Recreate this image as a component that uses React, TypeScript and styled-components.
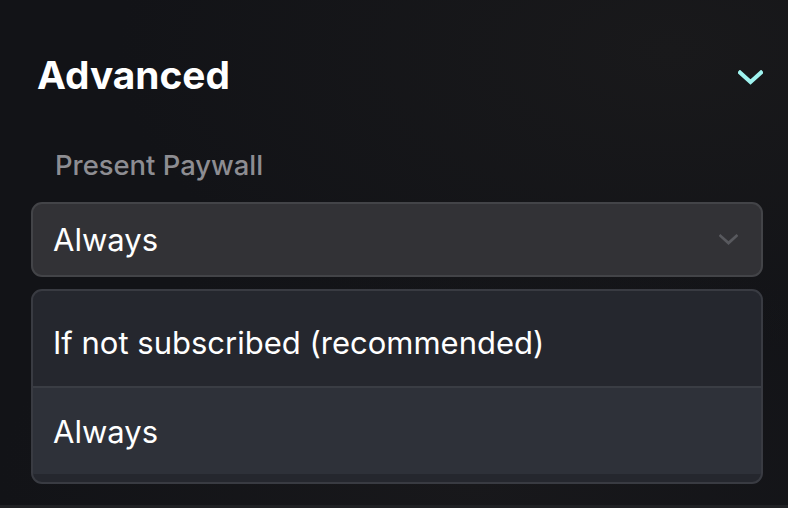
import { FC, useState } from "react"
import styled, { createGlobalStyle } from "styled-components"

const options = ["If not subscribed (recommended)", "Always"]

const GlobalStyle = createGlobalStyle`
  html, body {
    margin: 0;
    padding: 0;
    background: #131418;
  }
  body {
    font-family: Inter, "Noto Sans", "Liberation Sans", sans-serif;
    -webkit-font-smoothing: antialiased;
  }
`

const Chevron: FC<{ size: number; stroke: number; color: string }> = ({
  size,
  stroke,
  color,
}) => (
  <svg
    width={size}
    height={size * 0.6}
    viewBox="0 0 25 15"
    fill="none"
    stroke={color}
    strokeWidth={stroke}
    strokeLinecap="square"
  >
    <path d="M2 2.5 L12.5 12 L23 2.5" />
  </svg>
)

const App: FC = () => {
  const [value, setValue] = useState("Always")
  const [hovered, setHovered] = useState("Always")

  return (
    <>
      <GlobalStyle />
      <Page>
        <Header>
          <Title>Advanced</Title>
          <ToggleButton aria-label="Collapse">
            <Chevron size={25} stroke={4} color="#9ff3ef" />
          </ToggleButton>
        </Header>

        <Label>Present Paywall</Label>

        <SelectBox>
          <span>{value}</span>
          <Chevron size={19} stroke={3.6} color="#58595e" />
        </SelectBox>

        <OptionList>
          {options.map((option) => (
            <Option
              key={option}
              $active={option === hovered}
              onMouseEnter={() => setHovered(option)}
              onClick={() => setValue(option)}
            >
              {option}
            </Option>
          ))}
        </OptionList>
      </Page>
    </>
  )
}

export default App

const Page = styled.div`
  width: 788px;
  height: 508px;
  box-sizing: border-box;
  padding: 51px 25px 0 31px;
  background: radial-gradient(
      ellipse 70% 60% at 85% 10%,
      #19191b 0%,
      rgba(25, 25, 27, 0) 100%
    ),
    radial-gradient(
      ellipse 60% 50% at 60% 95%,
      #18181b 0%,
      rgba(24, 24, 27, 0) 100%
    ),
    #121317;
  border-bottom: 3px solid #202124;
  display: flex;
  flex-direction: column;
  overflow: hidden;
`

const Header = styled.div`
  display: flex;
  align-items: center;
  justify-content: space-between;
  height: 48px;
`

const Title = styled.h2`
  margin: 0 0 0 6px;
  font-size: 38.8px;
  line-height: 48px;
  font-weight: 700;
  color: #ffffff;
`

const ToggleButton = styled.button`
  background: none;
  border: 0;
  padding: 0;
  display: flex;
  margin-top: 4px;
  cursor: pointer;
`

const Label = styled.div`
  margin: 49px 0 0 24px;
  font-size: 27.4px;
  line-height: 34px;
  font-weight: 500;
  color: #8d8d92;
`

const SelectBox = styled.div`
  margin-top: 20px;
  height: 75px;
  box-sizing: border-box;
  padding: 0 23px 0 20px;
  display: flex;
  align-items: center;
  justify-content: space-between;
  background: #323236;
  border: 2px solid #434448;
  border-radius: 11px;
  font-size: 31px;
  font-weight: 400;
  color: #ffffff;
`

const OptionList = styled.div`
  margin-top: 12px;
  box-sizing: border-box;
  padding: 8px 0;
  background: #25272e;
  border: 2px solid #393b42;
  border-radius: 11px;
  overflow: hidden;
  display: flex;
  flex-direction: column;
`

const Option = styled.div<{ $active: boolean }>`
  height: 87px;
  display: flex;
  align-items: center;
  padding: 0 20px;
  font-size: 31px;
  color: #ffffff;
  background: ${({ $active }) => ($active ? "#2e3139" : "transparent")};
  cursor: pointer;

  & + & {
    height: 86px;
    border-top: 2px solid #3a3d44;
  }
`
